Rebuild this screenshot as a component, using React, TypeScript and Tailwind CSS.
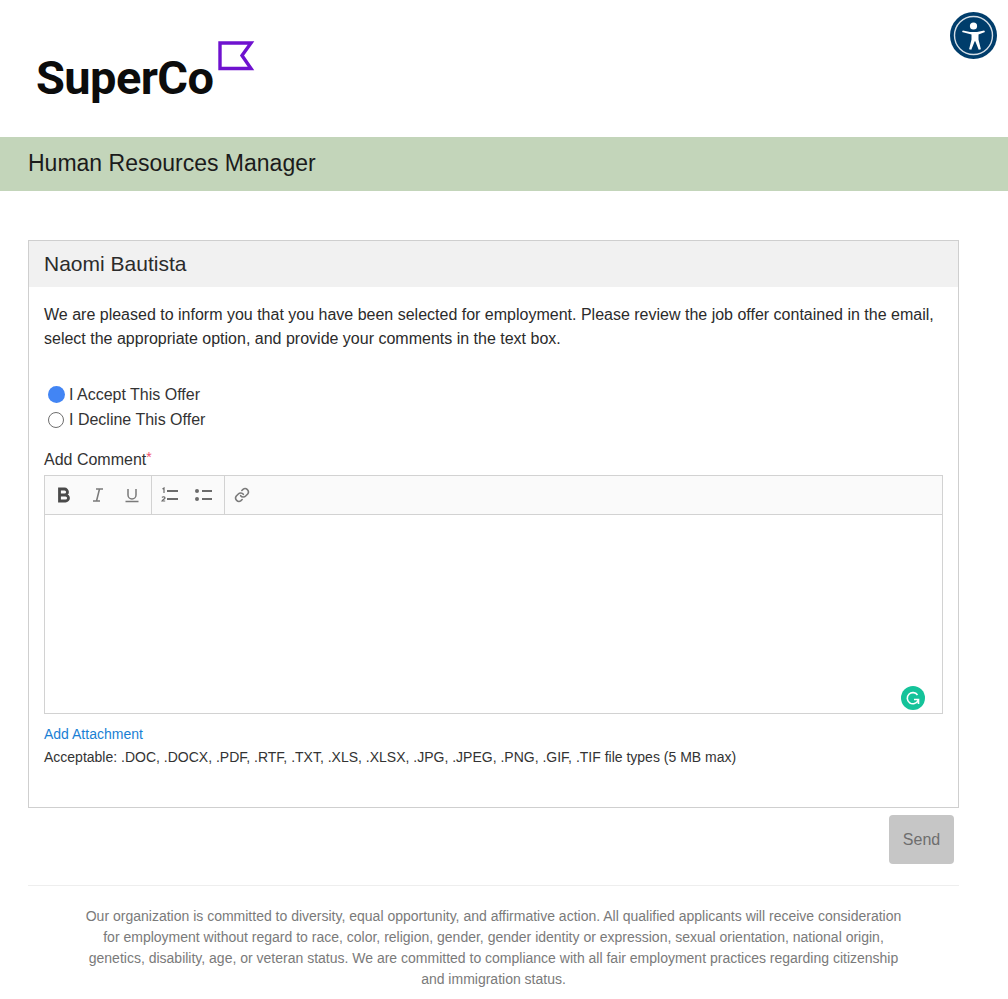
import React from "react";

const Bold = () => (
  <svg width="16" height="16" viewBox="0 0 16 16" fill="none" stroke="#4a4a4a" strokeWidth="2.8">
    <path d="M3.5 2h5a3 3 0 0 1 0 6h-5zM3.5 8h6a3 3 0 0 1 0 6h-6z" />
  </svg>
);
const Italic = () => (
  <svg width="16" height="16" viewBox="0 0 16 16" fill="none" stroke="#7a7a7a" strokeWidth="1.5">
    <path d="M6 2h7M3 14h7M9.5 2 6.5 14" />
  </svg>
);
const Underline = () => (
  <svg width="16" height="16" viewBox="0 0 16 16" fill="none" stroke="#7a7a7a" strokeWidth="1.5">
    <path d="M4 2v6a4 4 0 0 0 8 0V2M1.5 14.5h13" />
  </svg>
);
const Ordered = () => (
  <svg width="18" height="16" viewBox="0 0 18 16" fill="none" stroke="#6b6b6b" strokeWidth="1.6">
    <path d="M6 4h11M6 12h11" strokeWidth="2" />
    <path d="M1.5 2 3 1v5M1 10.5c1-1.2 3-.8 3 .4 0 1-2 1.6-3 3.1h3.2" strokeWidth="1.2" />
  </svg>
);
const Unordered = () => (
  <svg width="18" height="16" viewBox="0 0 18 16" fill="none" stroke="#6b6b6b">
    <circle cx="2" cy="4" r="2" fill="#6b6b6b" stroke="none" />
    <circle cx="2" cy="12" r="2" fill="#6b6b6b" stroke="none" />
    <path d="M7 4h10M7 12h10" strokeWidth="2" />
  </svg>
);
const LinkIcon = () => (
  <svg width="16" height="16" viewBox="0 0 24 24" fill="none" stroke="#7a7a7a" strokeWidth="2.4" strokeLinecap="round">
    <path d="M10 13a5 5 0 0 0 7.5.5l3-3a5 5 0 0 0-7-7l-1.7 1.7" />
    <path d="M14 11a5 5 0 0 0-7.5-.5l-3 3a5 5 0 0 0 7 7l1.7-1.7" />
  </svg>
);

export default function App() {
  return (
    <div className="relative min-h-[999px] bg-white font-['Liberation_Sans',Arial,sans-serif] text-[#212529]">
      <button className="absolute left-[950px] top-[12px] h-[47px] w-[47px]">
        <svg width="47" height="47" viewBox="0 0 47 47">
          <circle cx="23.5" cy="23.5" r="23.5" fill="#003d6b" />
          <circle cx="23.5" cy="23.5" r="19" fill="none" stroke="#d4dee6" strokeWidth="1.4" />
          <circle cx="23.5" cy="14" r="3.6" fill="#fff" />
          <path d="M12 20 12.8 18.4 20 20h7l7.2-1.6.8 1.6-6.5 2.6v5l2.4 9.6-2.2.6-3.4-8.6h-.6l-3.4 8.6-2.2-.6 2.4-9.6v-5z" fill="#fff" />
        </svg>
      </button>

      <header className="flex h-[137px] items-start pl-[36px] pt-[42px]">
        <div className="relative h-[64px] w-[220px]">
          <span className="block pt-[8px] font-['Roboto',sans-serif] text-[47px] font-bold leading-[56px] tracking-[-0.6px] text-[#0c0c0c]">
            SuperCo
          </span>
          <svg className="absolute left-[182px] top-[-1px]" width="37" height="30" viewBox="0 0 37 30" fill="none">
            <path d="M2 2h31L24 14.5 33 27.5H2z" stroke="#6f12cf" strokeWidth="3.4" />
          </svg>
        </div>
      </header>

      <div className="flex h-[54px] items-center bg-[#c3d5ba] pb-[2px] pl-[28px] text-[23px] text-[#1b1b1b]">
        Human Resources Manager
      </div>

      <main className="px-[28px] pt-[49px]">
        <section className="h-[568px] w-[931px] border border-[#cfcfcf]">
          <div className="flex h-[46px] items-center bg-[#f1f1f1] pl-[15px] text-[21px] text-[#2b2b2b]">
            Naomi Bautista
          </div>
          <div className="px-[15px]">
            <p className="mt-[16px] text-[16px] leading-[24px] text-[#2b2b2b]">
              We are pleased to inform you that you have been selected for employment. Please review the job offer contained in the email, select the appropriate option, and provide your comments in the text box.
            </p>
            <div className="mt-[31px] flex h-[25px] items-center pl-[4px] text-[16px] text-[#333]">
              <span className="mr-[4px] h-[17px] w-[17px] rounded-full bg-[#4285f4]" />
              I Accept This Offer
            </div>
            <div className="flex h-[25px] items-center pl-[4px] text-[16px] text-[#333]">
              <span className="mr-[5px] h-[16px] w-[16px] rounded-full border-[1.5px] border-[#6e6e6e] bg-white" />
              I Decline This Offer
            </div>
            <div className="mt-[16px] h-[24px] text-[16px] leading-[24px] text-[#333]">
              Add Comment<span className="relative top-[-3px] text-[14px] text-[#f0506e]">*</span>
            </div>
            <div className="relative mt-[3px] h-[239px] w-[899px] border border-[#d2d2d2]">
              <div className="flex h-[39px] items-stretch border-b border-[#d2d2d2] bg-[#fafafa]">
                <div className="flex w-[107px] items-center gap-[18px] border-r border-[#d2d2d2] pl-[11px]">
                  <Bold />
                  <Italic />
                  <Underline />
                </div>
                <div className="flex w-[73px] items-center gap-[16px] border-r border-[#d2d2d2] pl-[9px]">
                  <Ordered />
                  <Unordered />
                </div>
                <div className="flex items-center pl-[9px]">
                  <LinkIcon />
                </div>
              </div>
              <div className="absolute left-[856px] top-[210px] flex h-[24px] w-[24px] items-center justify-center rounded-full bg-[#15c39a]">
                <svg width="16" height="16" viewBox="0 0 16 16" fill="none" stroke="#fff" strokeWidth="1.6">
                  <path d="M12.5 5A5.6 5.6 0 1 0 13 10.5M9 9.5h4.5V14" />
                </svg>
              </div>
            </div>
            <a className="mt-[12px] block text-[14px] leading-[16px] text-[#1a7fd4]">Add Attachment</a>
            <p className="mt-[7px] text-[14px] leading-[16px] text-[#333]">
              Acceptable: .DOC, .DOCX, .PDF, .RTF, .TXT, .XLS, .XLSX, .JPG, .JPEG, .PNG, .GIF, .TIF file types (5 MB max)
            </p>
          </div>
        </section>

        <div className="flex w-[926px] justify-end pt-[7px]">
          <button className="h-[49px] w-[65px] rounded-[4px] bg-[#c6c6c6] text-[16px] text-[#6e6e6e]">Send</button>
        </div>

        <div className="mt-[21px] w-[931px] border-t border-[#eeeeee] pt-[20px]">
          <p className="mx-auto w-[826px] text-center text-[14px] leading-[21px] text-[#7a7a7a]">
            Our organization is committed to diversity, equal opportunity, and affirmative action. All qualified applicants will receive consideration for employment without regard to race, color, religion, gender, gender identity or expression, sexual orientation, national origin, genetics, disability, age, or veteran status. We are committed to compliance with all fair employment practices regarding citizenship and immigration status.
          </p>
        </div>
      </main>
    </div>
  );
}
